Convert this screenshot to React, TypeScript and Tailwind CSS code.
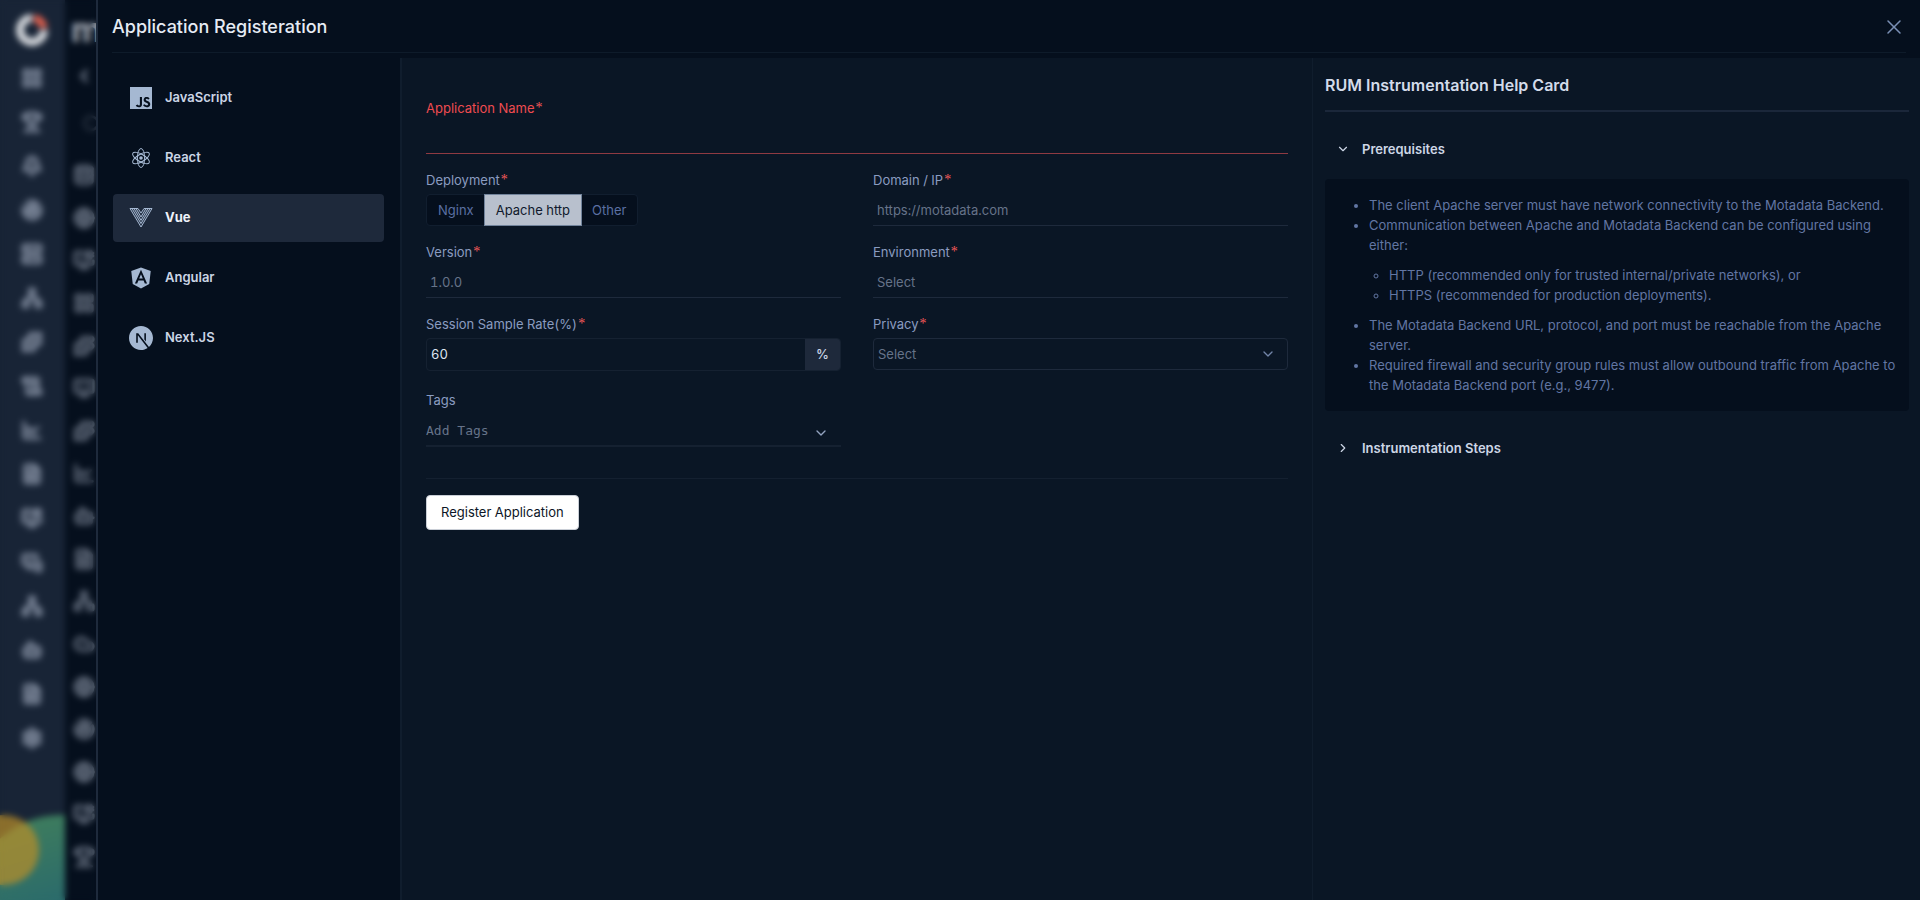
import React, { useState } from 'react'
import clsx from 'clsx'
import {
  Bell,
  Bot,
  ChartLine,
  ChevronDown,
  ChevronLeft,
  ChevronRight,
  Cloud,
  Database,
  FileText,
  Globe,
  LayoutGrid,
  Monitor,
  MonitorCog,
  MonitorSmartphone,
  Network,
  Puzzle,
  Radar,
  ScrollText,
  Search,
  Server,
  Settings,
  Trophy,
  X
} from 'lucide-react'
import { FaAngular } from 'react-icons/fa'
import { SiJavascript, SiNextdotjs } from 'react-icons/si'

const mainNav = [
  LayoutGrid, Trophy, Bell, Radar, Server, Network, Puzzle, ScrollText,
  ChartLine, FileText, MonitorCog, MonitorSmartphone, Network, Bot, FileText, Settings
]

const subNav = [
  Database, Globe, MonitorCog, LayoutGrid, Puzzle, Monitor, Puzzle, ChartLine,
  Bot, FileText, Network, Cloud, Globe, Radar, Globe, MonitorCog, Trophy
]

function ReactLogo() {
  return (
    <svg viewBox="0 0 24 24" className="size-6" fill="none" stroke="currentColor" strokeWidth="1">
      <ellipse cx="12" cy="12" rx="9.5" ry="3.7" transform="rotate(30 12 12)" />
      <ellipse cx="12" cy="12" rx="9.5" ry="3.7" transform="rotate(90 12 12)" />
      <ellipse cx="12" cy="12" rx="9.5" ry="3.7" transform="rotate(150 12 12)" />
      <circle cx="12" cy="12" r="3.7" strokeWidth="0.6" />
      <circle cx="12" cy="12" r="1.8" fill="currentColor" stroke="none" />
    </svg>
  )
}

function VueLogo() {
  return (
    <svg viewBox="0 0 24 24" className="size-6" fill="none" stroke="currentColor" strokeWidth="1">
      <path d="M1 2.5H9L12 7L15 2.5H23L12 21Z" fill="currentColor" fillOpacity="0.1" />
      <path d="M3 2.5L12 17.5L21 2.5" />
      <path d="M5 2.5L12 14.3L19 2.5" />
      <path d="M7 2.5L12 11L17 2.5" />
    </svg>
  )
}

const frameworks = [
  { name: 'JavaScript', icon: <SiJavascript className="size-[22px]" /> },
  { name: 'React', icon: <ReactLogo /> },
  { name: 'Vue', icon: <VueLogo /> },
  { name: 'Angular', icon: <FaAngular className="size-6" /> },
  { name: 'Next.JS', icon: <SiNextdotjs className="size-6" /> }
]

interface FieldProps {
  id: string
  label: string
  required?: boolean
  error?: boolean
  group?: boolean
  children: React.ReactNode
}

function Field({ id, label, required = true, error, group, children }: FieldProps) {
  const className = clsx('flex items-center gap-px leading-5', error ? 'text-[#ee4b50]' : 'text-[#8a9cc0]')
  const content = (
    <>
      {label}
      {required && <span className="font-['Liberation_Serif',serif] text-sm leading-5 text-[#f85a5a]">*</span>}
    </>
  )

  return (
    <div className="flex flex-col gap-1">
      {group ? (
        <span id={id} className={className}>{content}</span>
      ) : (
        <label htmlFor={id} className={className}>{content}</label>
      )}
      {children}
    </div>
  )
}

const lineInput =
  'h-8 w-full border-b border-[#1e2a3c] bg-transparent px-1 pt-px text-[#dde4f0] outline-none placeholder:text-[#667389]'

function BackgroundApp() {
  return (
    <div className="relative flex w-24 shrink-0 overflow-hidden bg-[#050f1d]" aria-hidden="true">
      <div className="relative flex w-[65px] shrink-0 flex-col items-center bg-[#182436] pt-[14px] pr-px text-[#7e899c]">
        <svg viewBox="0 0 32 32" className="size-8" fill="none" strokeWidth="8">
          <path d="M16 4A12 12 0 1 0 28 16" stroke="#d4d7dc" />
          <path d="M18 4.2A12 12 0 0 1 27.8 14" stroke="#e0604e" />
        </svg>
        <div className="mt-[21px] flex flex-col gap-[22px]">
          {mainNav.map((Icon, i) => (
            <Icon key={i} className="size-[22px]" strokeWidth={3} fill="currentColor" fillOpacity={0.45} />
          ))}
        </div>
        <svg viewBox="0 0 65 90" className="absolute bottom-0 left-0 w-full overflow-hidden">
          <defs>
            <linearGradient id="hill" x1="0" y1="0" x2="0.3" y2="1">
              <stop offset="0" stopColor="#42805a" />
              <stop offset="0.6" stopColor="#2a6a6c" />
            </linearGradient>
          </defs>
          <circle cx="61" cy="95" r="90" fill="url(#hill)" />
          <circle cx="4" cy="40" r="35" fill="#bb8f28" fillOpacity="0.7" />
        </svg>
      </div>
      <div className="flex flex-col items-center pb-8 text-[#616b7b]">
        <span className="ml-[6px] h-[66px] pt-1 text-[34px] font-bold text-[#a5abb5]">m</span>
        <ChevronLeft className="size-5" strokeWidth={4} />
        <Search className="mt-7 ml-4 size-5 text-[#2c3645]" strokeWidth={3} />
        <div className="mt-[30px] flex flex-1 flex-col justify-between">
          {subNav.map((Icon, i) => (
            <Icon key={i} className="size-[22px]" strokeWidth={3} fill="currentColor" fillOpacity={0.3} />
          ))}
        </div>
      </div>
      <div className="absolute inset-0 backdrop-blur-[3px]" />
    </div>
  )
}

function RegistrationForm() {
  const [deployment, setDeployment] = useState('Apache http')

  return (
    <form className="flex-1 border-l-2 border-[#101d2d] bg-[#0a1625] px-6 pt-10 tabular-nums" onSubmit={e => e.preventDefault()}>
      <Field id="app-name" label="Application Name" error>
        <input id="app-name" className="h-8 w-full border-b border-[#8f3a42] bg-transparent px-1 text-[#dde4f0] outline-none" />
      </Field>
      <div className="mt-4 grid grid-cols-2 gap-x-8 gap-y-4">
        <Field id="deployment" label="Deployment" group>
          <div
            role="group"
            aria-labelledby="deployment"
            className="flex h-8 self-start rounded border border-[#111e2f] bg-[#050f1d]"
          >
            {['Nginx', 'Apache http', 'Other'].map(option => (
              <button
                key={option}
                type="button"
                onClick={() => setDeployment(option)}
                className={clsx(
                  '-mx-px -my-px border px-[11px] pt-px',
                  option === deployment
                    ? 'border-[#71839b] bg-[#b8c0cd] text-[#101a2c]'
                    : 'border-transparent text-[#5b70a3]'
                )}
              >
                {option}
              </button>
            ))}
          </div>
        </Field>
        <Field id="domain" label="Domain / IP">
          <input id="domain" className={lineInput} placeholder="https://motadata.com" />
        </Field>
        <Field id="version" label="Version">
          <input id="version" className={lineInput} placeholder="1.0.0" />
        </Field>
        <Field id="environment" label="Environment">
          <input id="environment" className={lineInput} placeholder="Select" />
        </Field>
        <Field id="rate" label="Session Sample Rate(%)">
          <div className="flex h-[33px] overflow-hidden rounded border border-[#152131]">
            <input id="rate" className="min-w-0 flex-1 bg-transparent px-1 text-[#dde4f0] outline-none" defaultValue="60" />
            <span className="flex w-[35px] items-center justify-center bg-[#1e293b] font-medium text-[#cbd5e5]">%</span>
          </div>
        </Field>
        <Field id="privacy" label="Privacy">
          <div className="grid items-center">
            <select
              id="privacy"
              defaultValue=""
              className="col-start-1 row-start-1 h-8 w-full appearance-none rounded border border-[#1e2a3c] bg-transparent px-1 pt-px text-[#667389] outline-none"
            >
              <option value="">Select</option>
            </select>
            <ChevronDown className="pointer-events-none col-start-1 row-start-1 mr-3 size-4 justify-self-end text-[#7285a8]" />
          </div>
        </Field>
      </div>
      <div className="mt-[19px] grid grid-cols-2 gap-x-8">
        <Field id="tags" label="Tags" required={false}>
          <div className="grid items-center">
            <input
              id="tags"
              placeholder="Add Tags"
              className="col-start-1 row-start-1 h-[33px] w-full border-b-2 border-[#152131] bg-transparent pt-px font-['DejaVu_Sans_Mono','Liberation_Mono',monospace] text-[#dde4f0] outline-none placeholder:text-[#667389]"
            />
            <ChevronDown className="pointer-events-none col-start-1 row-start-1 mt-1 mr-3 size-4 justify-self-end text-[#93a3c0]" />
          </div>
        </Field>
      </div>
      <hr className="mt-[31px] border-[#142030]" />
      <button
        type="submit"
        className="mt-4 h-[35px] rounded border border-[#c9ced6] bg-white px-[14px] text-[#0c1626]"
      >
        Register Application
      </button>
    </form>
  )
}

function HelpCard() {
  return (
    <aside className="w-[608px] shrink-0 border-l border-[#101d2d] bg-[#0a1625] pr-[11px] pl-3">
      <h2 className="border-b-2 border-[#1b273a] pt-[15px] pb-[13px] text-base leading-6 font-semibold text-[#d3dbea]">
        RUM Instrumentation Help Card
      </h2>
      <button type="button" className="mt-[27px] flex items-center gap-3 pl-[11px] leading-5 font-semibold text-[#cdd6e6]" aria-expanded="true">
        <ChevronDown className="size-[14px]" />
        Prerequisites
      </button>
      <div className="mt-5 rounded bg-[#050f1d] py-4 pr-2 pl-11 leading-5 text-[#6276a3]">
        <ul className="list-disc">
          <li>The client Apache server must have network connectivity to the Motadata Backend.</li>
          <li>
            Communication between Apache and Motadata Backend can be configured using either:
            <ul className="my-[10px] list-[circle] pl-5">
              <li>HTTP (recommended only for trusted internal/private networks), or</li>
              <li>HTTPS (recommended for production deployments).</li>
            </ul>
          </li>
          <li>The Motadata Backend URL, protocol, and port must be reachable from the Apache server.</li>
          <li>
            Required firewall and security group rules must allow outbound traffic from Apache to the Motadata Backend
            port (e.g., 9477).
          </li>
        </ul>
      </div>
      <button type="button" className="mt-[27px] flex items-center gap-3 pl-[11px] leading-5 font-semibold text-[#cdd6e6]" aria-expanded="false">
        <ChevronRight className="size-[14px]" />
        Instrumentation Steps
      </button>
    </aside>
  )
}

export default function App() {
  const [selected, setSelected] = useState('Vue')

  return (
    <div className="flex min-h-screen bg-[#050f1d] font-['Inter','Liberation_Sans',sans-serif] text-[13px]">
      <BackgroundApp />
      <main className="flex min-w-0 flex-1 flex-col border-l-2 border-[#1e2a3c]">
        <header className="mx-[14px] flex h-[53px] items-center justify-between border-b border-[#0e1b2a] pt-[2px]">
          <h1 className="text-lg font-medium text-[#e6ebf4]">Application Registeration</h1>
          <button type="button" aria-label="Close" className="text-[#7a8fb5]">
            <X className="size-6" strokeWidth={1.5} />
          </button>
        </header>
        <div className="mt-[5px] flex flex-1">
          <nav className="flex w-[302px] shrink-0 flex-col gap-3 pt-4 pr-4 pl-[15px]">
            {frameworks.map(({ name, icon }) => (
              <button
                key={name}
                type="button"
                onClick={() => setSelected(name)}
                className={clsx(
                  'flex h-12 items-center gap-3 rounded px-4',
                  name === selected ? 'bg-[#1e293b] font-bold text-[#eef2f9]' : 'font-semibold text-[#cbd5e5]'
                )}
              >
                <span className="flex size-6 items-center justify-center text-[#a5b8d2]">{icon}</span>
                {name}
              </button>
            ))}
          </nav>
          <RegistrationForm />
          <HelpCard />
        </div>
      </main>
    </div>
  )
}
